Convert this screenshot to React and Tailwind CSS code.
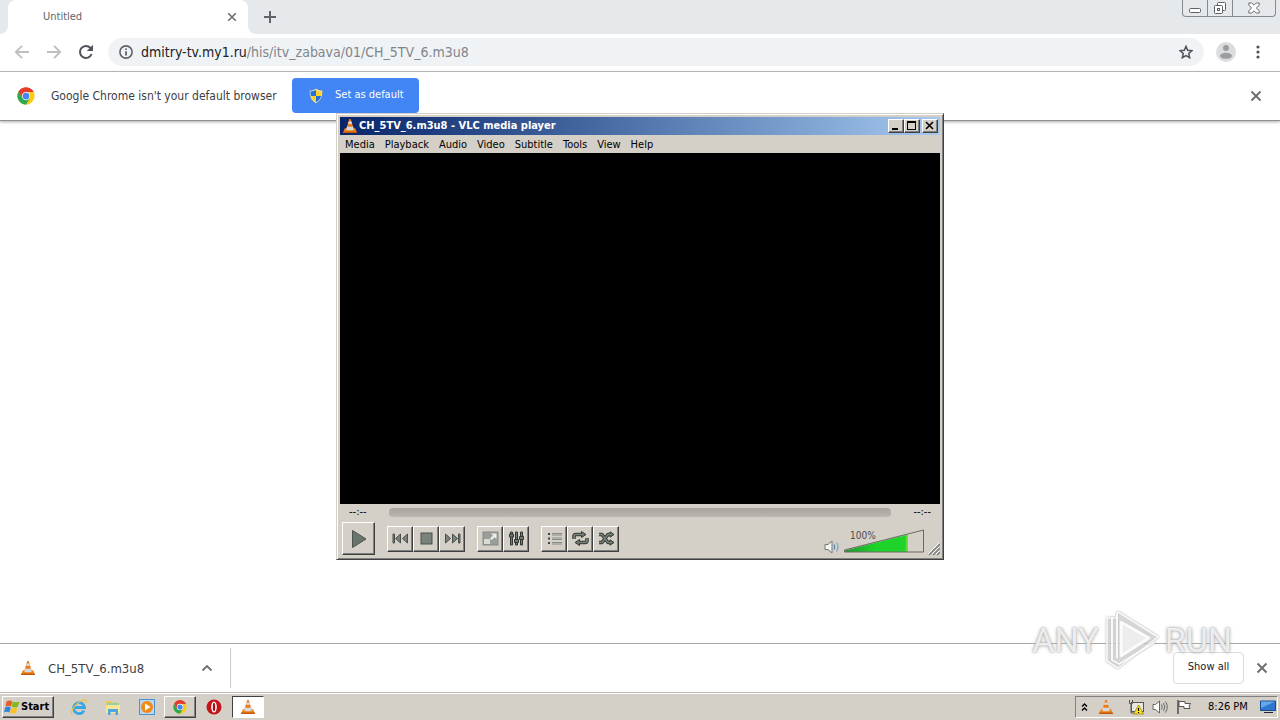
import React from "react";

const raised =
  "border border-t-white border-l-white border-r-[#404040] border-b-[#404040] shadow-[inset_-1px_-1px_0_#808080] bg-[#d4d0c8]";
const sunken =
  "border border-t-[#404040] border-l-[#404040] border-r-white border-b-white bg-white";

const Cone = ({ className }) => (
  <svg viewBox="0 0 16 16" className={className} aria-hidden="true">
    <path d="M2.800 10.200h10.400l1.800 4.800H1z" fill="#f08418" />
    <path d="M1.300 13.600h13.400L15 15H1z" fill="#c4560a" />
    <path d="M7.300 1h1.400l3.300 10.600c-1.600 1.200-6.400 1.200-8 0z" fill="#ee7a12" />
    <path d="M6.600 3.400h2.800l.7 2.200c-1 .6-3.200.6-4.200 0z" fill="#d9dde0" />
    <path d="M5.200 8.200c1.400.8 4.200.8 5.600 0l1 3.200c-1.700 1.200-5.900 1.200-7.600 0z" fill="#d3dae0" />
  </svg>
);

const Chrome = ({ className }) => (
  <svg viewBox="0 0 48 48" className={className} aria-hidden="true">
    <circle cx="24" cy="24" r="23" fill="#fbc916" />
    <path d="M24 24 4.100 12.500A23 23 0 0 1 43.900 12.500H24z" fill="#e33b2e" />
    <path d="M4.100 12.500A23 23 0 0 0 24 47l10-17.200L24 24 14 29.800z" fill="#2da94f" />
    <path d="M24 13h20.200A23 23 0 0 0 4.100 12.500L14 29.800z" fill="#e33b2e" />
    <circle cx="24" cy="24" r="11" fill="#fff" />
    <circle cx="24" cy="24" r="9" fill="#4285f4" />
  </svg>
);

const Close = ({ className }) => (
  <svg viewBox="0 0 12 12" className={className} fill="none" stroke="#6c7074" strokeWidth="2" aria-hidden="true">
    <path d="M1.500 1.500l9 9M10.500 1.500l-9 9" />
  </svg>
);

const Shield = () => (
  <svg viewBox="0 0 16 16" className="h-4 w-4" aria-hidden="true">
    <path d="M8 .5C10 1.800 12 2.300 14.500 2.300c.3 6-1.500 10.500-6.500 13.200C3 12.800 1.200 8.300 1.500 2.300 4 2.300 6 1.800 8 .5z" fill="#e8eef2" stroke="#5b8190" strokeWidth=".6" />
    <path d="M8 2v6H2.900c-.4-1.500-.4-3-.4-4.700C4.500 3.300 6.400 3 8 2z" fill="#2470d8" />
    <path d="M8 2v6h5.100c.4-1.500.4-3 .4-4.700C11.500 3.300 9.600 3 8 2z" fill="#fbd22b" />
    <path d="M8 8v6.400C5.300 12.800 3.600 10.800 2.900 8z" fill="#fbd22b" />
    <path d="M8 8v6.400c2.700-1.600 4.400-3.600 5.100-6.400z" fill="#2470d8" />
  </svg>
);

const TabStrip = () => (
  <div className="flex h-[34px] bg-white">
    <div className="w-2 rounded-br-lg bg-[#e5e9ec]" />
    <div className="w-60 bg-[#e5e9ec]">
      <div className="flex h-full items-center justify-between rounded-t-lg bg-white pr-[10px] pl-[35px] text-[#5f6368]">
        <span className="text-[11px]">Untitled</span>
        <button aria-label="Close tab" className="p-px">
          <Close className="h-[10px] w-[10px]" />
        </button>
      </div>
    </div>
    <div className="flex flex-1 items-start justify-between rounded-bl-lg bg-[#e5e9ec] pr-1 pl-4">
      <button aria-label="New tab" className="flex h-[34px] items-center">
        <svg viewBox="0 0 12 12" className="h-3 w-3" stroke="#5f6368" strokeWidth="2">
          <path d="M6 0v12M0 6h12" />
        </svg>
      </button>
      <div className="flex h-[17px] divide-x divide-[#848a90] rounded-b border border-t-0 border-[#848a90]">
        <button aria-label="Minimize" className="flex w-[25px] items-center justify-center">
          <svg viewBox="0 0 12 14" className="h-[14px] w-3" fill="#fff" stroke="#5a6169">
            <rect x=".5" y="7.500" width="11" height="4" rx="1" />
          </svg>
        </button>
        <button aria-label="Restore" className="flex w-[25px] items-center justify-center">
          <svg viewBox="0 0 14 14" className="h-[14px] w-[14px]" fill="#fff" stroke="#5a6169">
            <rect x="4.500" y="1.500" width="8" height="8" rx="1" />
            <rect x="1.500" y="4.500" width="8" height="8" rx="1" />
            <rect x="4.500" y="7.500" width="2" height="2" />
          </svg>
        </button>
        <button aria-label="Close" className="flex w-[42px] items-center justify-center">
          <svg viewBox="0 0 12 12" className="h-3 w-3" fill="#fff" stroke="#5a6169" strokeWidth=".9">
            <path d="M.8 1h3L6 3.200 8.200 1h3v2L8.500 6l2.700 3v2h-3L6 8.800 3.800 11h-3V9l2.700-3L.8 3z" />
          </svg>
        </button>
      </div>
    </div>
  </div>
);

const Toolbar = () => (
  <div className="flex h-[38px] items-center border-b border-[#b5b7b9] bg-white pr-3 pb-px pl-[14px]">
    <div className="flex items-center gap-4">
      <button aria-label="Back">
        <svg viewBox="0 0 16 16" className="h-4 w-4" fill="none" stroke="#bdbfc1" strokeWidth="1.800">
          <path d="M15 8H2M8 1.800 1.800 8 8 14.200" />
        </svg>
      </button>
      <button aria-label="Forward">
        <svg viewBox="0 0 16 16" className="h-4 w-4" fill="none" stroke="#bdbfc1" strokeWidth="1.800">
          <path d="M1 8h13M8 1.800 14.200 8 8 14.200" />
        </svg>
      </button>
      <button aria-label="Reload">
        <svg viewBox="0 0 16 16" className="h-4 w-4" fill="none" stroke="#505458" strokeWidth="2">
          <path d="M13.600 10A6 6 0 1 1 12.500 4" />
          <path d="M15 .8V7H8.800z" fill="#505458" stroke="none" />
        </svg>
      </button>
    </div>
    <div className="ml-[14px] flex h-7 flex-1 items-center rounded-full bg-[#f0f3f5] px-[11px]">
      <svg viewBox="0 0 14 14" className="h-[14px] w-[14px]" fill="none" stroke="#5f6368">
        <circle cx="7" cy="7" r="6.100" strokeWidth="1.600" />
        <path d="M7 6.200v4.300M7 3.400v1.600" strokeWidth="1.800" />
      </svg>
      <a href="#url" className="ml-2 flex-1 text-[14px] text-[#80858b]">
        <span className="text-[#202124]">dmitry-tv.my1.ru</span>
        /his/itv_zabava/01/CH_5TV_6.m3u8
      </a>
      <button aria-label="Bookmark">
        <svg viewBox="0 0 16 16" className="h-[14px] w-[14px]" fill="none" stroke="#505458" strokeWidth="1.700">
          <path d="M8 1.500l1.900 4.600 4.900.4-3.700 3.200 1.100 4.800L8 12l-4.200 2.500 1.100-4.800-3.700-3.200 4.900-.4z" />
        </svg>
      </button>
    </div>
    <button aria-label="Profile" className="ml-3">
      <svg viewBox="0 0 20 20" className="h-5 w-5">
        <circle cx="10" cy="10" r="10" fill="#dcdddf" />
        <circle cx="10" cy="6" r="3" fill="#9b9da0" />
        <ellipse cx="10" cy="13.800" rx="6" ry="3" fill="#9b9da0" />
      </svg>
    </button>
    <button aria-label="Menu" className="ml-3 flex w-5 justify-center">
      <svg viewBox="0 0 4 14" className="h-[14px] w-1" fill="#505458">
        <circle cx="2" cy="2" r="1.600" />
        <circle cx="2" cy="7" r="1.600" />
        <circle cx="2" cy="12" r="1.600" />
      </svg>
    </button>
  </div>
);

const InfoBar = () => (
  <div className="flex h-[49px] items-center border-b border-[#8f8f8f] bg-white pr-[18px] pb-px pl-[17px] shadow-[0_1px_3px_#aaa]">
    <Chrome className="h-[18px] w-[18px]" />
    <span className="ml-4 w-[241px] text-[12px] whitespace-nowrap text-[#3c4043]">
      Google Chrome isn't your default browser
    </span>
    <button className="flex h-[35px] w-[127px] items-center gap-[11px] rounded bg-[#4285f4] pl-4 text-[11px] text-white">
      <Shield />
      Set as default
    </button>
    <button aria-label="Dismiss" className="ml-auto">
      <Close className="h-3 w-3" />
    </button>
  </div>
);

const menus = ["Media", "Playback", "Audio", "Video", "Subtitle", "Tools", "View", "Help"];

const glyph = { fill: "#7a827c", stroke: "#4b504c", strokeWidth: 1 };

const controlGroups = [
  [
    {
      label: "Previous",
      icon: (
        <g {...glyph}>
          <path d="M1 4h1.500v9H1zM8.500 4v9L3.500 8.500zM15.500 4v9l-5-4.500z" />
        </g>
      ),
    },
    { label: "Stop", icon: <rect x="3" y="3" width="11" height="11" {...glyph} /> },
    {
      label: "Next",
      icon: (
        <g {...glyph}>
          <path d="M14.500 4H16v9h-1.500zM8.500 4v9l5-4.500zM1.500 4v9l5-4.500z" />
        </g>
      ),
    },
  ],
  [
    {
      label: "Fullscreen",
      icon: (
        <g>
          <rect x="1" y="2" width="15" height="13" fill="#9a9e9a" stroke="#858a86" />
          <path d="M2 9h6v5H2z" fill="#d8dad6" />
          <path d="M9 3.500h5.500V9L12.700 7.200 9.500 10 8 8.500l3-3z" fill="#eceeea" />
        </g>
      ),
    },
    {
      label: "Equalizer",
      icon: (
        <g fill="#737a74" stroke="#343834">
          <path d="M2.500 2h2v13h-2zM7.500 2h2v13h-2zM12.500 2h2v13h-2z" />
          <path d="M1.500 4h4v3h-4zM6.500 9.500h4v3h-4zM11.500 6.500h4v3h-4z" />
        </g>
      ),
    },
  ],
  [
    {
      label: "Playlist",
      icon: (
        <g>
          <path d="M2 3h2v2H2zM2 7.500h2v2H2zM2 12h2v2H2z" fill="#3e433f" />
          <path d="M6 3.500h10M6 5h10M6 8h10M6 9.500h10M6 12.500h10M6 14h10" stroke="#868c87" />
        </g>
      ),
    },
    {
      label: "Loop",
      icon: (
        <g fill="none" strokeLinejoin="round">
          <path d="M2 9V6.500Q2 4.500 4 4.500h6M15 8v2.500q0 2-2 2H7" stroke="#343834" strokeWidth="3.500" />
          <path d="M9.500 1.500v6L14 4.500zM7.500 9.500v6L3 12.500z" fill="#6f7771" stroke="#343834" />
          <path d="M2 9V6.500Q2 4.500 4 4.500h6M15 8v2.500q0 2-2 2H7" stroke="#7d847e" strokeWidth="1.500" />
        </g>
      ),
    },
    {
      label: "Shuffle",
      icon: (
        <g fill="none" strokeLinejoin="round">
          <path d="M1 4.500h3l6 8h3M1 12.500h3l6-8h3" stroke="#343834" strokeWidth="3.500" />
          <path d="M12 1.800v5.400l4-2.700zM12 9.800v5.400l4-2.700z" fill="#6f7771" stroke="#343834" />
          <path d="M1 4.500h3l6 8h3M1 12.500h3l6-8h3" stroke="#7d847e" strokeWidth="1.300" />
        </g>
      ),
    },
  ],
];

const VlcWindow = () => (
  <section className="absolute top-[113px] left-1/2 w-[608px] -translate-x-1/2 border border-t-[#d4d0c8] border-r-[#404040] border-b-[#404040] border-l-[#d4d0c8] bg-[#d4d0c8] p-[3px] shadow-[inset_1px_1px_0_#fff,inset_-1px_-1px_0_#808080]">
    <header className="flex h-[18px] items-center bg-linear-to-r from-[#0a246a] to-[#a6caf0] px-0.5">
      <Cone className="h-4 w-4" />
      <h1 className="ml-px flex-1 text-[11px] font-bold text-white">CH_5TV_6.m3u8 - VLC media player</h1>
      <button aria-label="Minimize" className={`flex h-[14px] w-4 items-center justify-center ${raised}`}>
        <svg viewBox="0 0 10 10" className="h-[10px] w-[10px]">
          <path d="M1 7h6v2H1z" />
        </svg>
      </button>
      <button aria-label="Maximize" className={`flex h-[14px] w-4 items-center justify-center ${raised}`}>
        <svg viewBox="0 0 10 10" className="h-[10px] w-[10px]">
          <path d="M0 0h9v9H0zM1 2v6h7V2z" fillRule="evenodd" />
        </svg>
      </button>
      <button aria-label="Close" className={`ml-0.5 flex h-[14px] w-4 items-center justify-center ${raised}`}>
        <svg viewBox="0 0 10 10" className="h-[10px] w-[10px]" stroke="#000" strokeWidth="1.600">
          <path d="M1 1l7 7M8 1l-7 7" />
        </svg>
      </button>
    </header>

    <nav className="flex h-[18px] items-center gap-[10px] pt-0.5 pl-[5px] text-[11px] text-black">
      {menus.map((m) => (
        <button key={m}>{m}</button>
      ))}
    </nav>

    <div className="h-[351px] bg-black" />

    <div className="flex h-[17px] items-center px-[9px] text-[11px] text-black">
      <span className="w-10">--:--</span>
      <input
        type="range"
        aria-label="Position"
        defaultValue="0"
        className="h-[9px] flex-1 appearance-none rounded-sm bg-linear-to-b from-[#a8a39d] to-[#bcb7b1] [&::-webkit-slider-thumb]:appearance-none"
      />
      <span className="w-10 text-right">--:--</span>
    </div>

    <div className="flex h-[35px] items-center justify-between pl-0.5">
      <div className="flex items-center gap-3">
        <button aria-label="Play" className={`flex h-[33px] w-[33px] items-center justify-center ${raised}`}>
          <svg viewBox="0 0 18 20" className="h-5 w-[18px]">
            <path d="M2.500 1.500v17L16 10z" fill="#69746c" stroke="#4b524d" strokeLinejoin="round" />
          </svg>
        </button>
        {controlGroups.map((group) => (
          <div key={group[0].label} className="flex">
            {group.map(({ label, icon }) => (
              <button
                key={label}
                aria-label={label}
                className={`flex h-[26px] w-[26px] items-center justify-center ${raised}`}
              >
                <svg viewBox="0 0 17 17" className="h-[17px] w-[17px]">
                  {icon}
                </svg>
              </button>
            ))}
          </div>
        ))}
      </div>

      <div className="flex items-end gap-1 self-end">
        <svg viewBox="0 0 16 14" className="mb-0.5 h-[14px] w-4" fill="none">
          <path d="M1 4.500h3L8 1v12L4 9.500H1z" fill="#f4f4f2" stroke="#777" />
          <path d="M10 4.500q1.500 2.500 0 5" stroke="#4c86b8" strokeWidth="1.300" />
          <path d="M12.500 2.500q3 4.500 0 9" stroke="#7fa9c8" strokeWidth="1.300" />
        </svg>
        <label className="relative mb-[3px] block h-6 w-20">
          <svg viewBox="0 0 80 24" className="h-6 w-20">
            <defs>
              <linearGradient id="vol">
                <stop offset="0" stopColor="#1e9a2c" />
                <stop offset=".5" stopColor="#1ed42a" />
                <stop offset=".95" stopColor="#1ed42a" />
                <stop offset="1" stopColor="#8fdc3a" />
              </linearGradient>
            </defs>
            <path d="M1 21.500 64 5.500V23H1z" fill="url(#vol)" />
            <path d="M.5 21 79.500 1v22H.5z" fill="none" stroke="#6b6862" />
          </svg>
          <span className="absolute top-0 left-[6px] text-[10px] leading-[14px] text-[#4c4c4c]">100%</span>
          <input
            type="range"
            aria-label="Volume"
            max="125"
            defaultValue="100"
            className="absolute inset-0 h-full w-full opacity-0"
          />
        </label>
        <svg viewBox="1 0 12 14" className="h-[14px] w-3">
          <path d="M2 13 13 2M6 13l7-7M10 13l3-3" stroke="#808080" strokeWidth="1.600" />
          <path d="M1 12 12 1M5 12l7-7M9 12l3-3" stroke="#fff" strokeWidth="1" />
        </svg>
      </div>
    </div>
  </section>
);

const Watermark = () => (
  <div
    aria-hidden="true"
    className="pointer-events-none absolute right-12 bottom-12 flex items-center gap-1 font-['Roboto','Liberation_Sans',sans-serif] text-[34px] leading-none text-white/80 [text-shadow:0_0_2px_#999,0_0_4px_#bbb]"
  >
    <span>ANY</span>
    <svg viewBox="0 0 58 64" className="h-16 w-[58px] drop-shadow-[0_0_1px_#999]" fill="none" stroke="#fff" strokeOpacity=".9" strokeLinejoin="round">
      <path d="M15 4 55 29 15 60 4 53V10H13z" fill="#e4e4e4" fillOpacity=".45" strokeWidth="1.500" />
      <path d="M18 14l28 16-28 18z" fill="#fff" fillOpacity=".7" strokeWidth="3" />
      <path d="M9 10v42l7 4 36-22M14 6v44" strokeWidth="2" />
    </svg>
    <span>RUN</span>
  </div>
);

const DownloadBar = () => (
  <div className="flex h-[49px] items-center border-t border-[#a9a9a9] bg-white pr-3 pb-px">
    <div className="flex h-10 w-[231px] items-center border-r border-[#c9cbcd] pr-[17px] pl-5">
      <Cone className="h-4 w-4" />
      <a href="#download" className="ml-3 flex-1 pt-0.5 text-[13px] text-[#3c4043]">
        CH_5TV_6.m3u8
      </a>
      <button aria-label="Download options">
        <svg viewBox="0 0 12 8" className="h-2 w-3" fill="none" stroke="#6c7074" strokeWidth="1.800">
          <path d="M1.500 6.500 6 2l4.500 4.500" />
        </svg>
      </button>
    </div>
    <button className="ml-auto h-8 w-[71px] rounded border border-[#dadce0] text-[11px] text-[#202124]">
      Show all
    </button>
    <button aria-label="Close downloads" className="ml-3">
      <Close className="h-3 w-3" />
    </button>
  </div>
);

const Taskbar = () => (
  <footer className="flex h-7 items-center border-t border-[#bdbab4] bg-[#d4d0c8] px-0.5 pt-px text-[11px] text-black shadow-[inset_0_1px_0_#fff]">
    <button className={`flex h-[22px] w-[52px] items-center gap-px pl-px font-bold ${raised}`}>
      <svg viewBox="0 0 16 16" className="h-4 w-4">
        <path d="M2.500 2.500q3-2 5.800 0L7 7.600Q4.500 6 1.500 7.400z" fill="#ee5a24" />
        <path d="M8.800 2.600q3 1.500 6.700 0l-1.700 5.200q-3 1.200-6 0z" fill="#7fba1c" />
        <path d="M1.200 8.200q3-1.400 5.500.2l-1.300 5.200q-2.800-1.600-5.400-.2z" fill="#2f86dd" />
        <path d="M7.400 8.700q3 1.300 6.100 0l-1.600 5.200q-3 1.200-5.800-.2z" fill="#fbc31c" />
      </svg>
      Start
    </button>
    <div className="ml-2 flex items-center">
      <button aria-label="Internet Explorer" className="flex w-[34px] justify-center">
        <svg viewBox="0 0 18 18" className="h-[18px] w-[18px]" fill="none">
          <path d="M14 12.500A5.500 5.500 0 1 1 14.500 9.500H4.500" stroke="#38a5e4" strokeWidth="2.800" />
          <path d="M2.500 16.500C-.5 15 4 7 10 3.500S17 2 16 5" stroke="#edc344" strokeWidth="1.300" />
        </svg>
      </button>
      <button aria-label="Explorer" className="flex w-[34px] justify-center">
        <svg viewBox="0 0 18 18" className="h-[18px] w-[18px]">
          <path d="M2 3h5l1 1.500h7V15H2z" fill="#e9c75a" />
          <path d="M3 5h12v3H3z" fill="#8fd3a0" />
          <path d="M2 7h14v8H2z" fill="#f8e59a" />
          <path d="M4 17v-6h10v6h-2.500v-3h-5v3z" fill="#49a8df" />
        </svg>
      </button>
      <button aria-label="Media Player" className="flex w-[34px] justify-center">
        <svg viewBox="0 0 16 16" className="h-4 w-4">
          <rect x=".5" y=".5" width="15" height="15" fill="#b9d7ef" stroke="#4d92d0" />
          <circle cx="8" cy="8" r="6" fill="#f48a16" />
          <path d="M6 4.500v7L11.500 8z" fill="#fff" />
        </svg>
      </button>
      <button aria-label="Chrome" className={`flex h-[22px] w-8 items-center justify-center ${raised}`}>
        <Chrome className="h-[14px] w-[14px]" />
      </button>
      <button aria-label="Opera" className="flex w-9 justify-center">
        <svg viewBox="0 0 16 16" className="h-4 w-4">
          <circle cx="8" cy="8" r="7.500" fill="#c3131b" />
          <ellipse cx="8" cy="8" rx="2.800" ry="5.500" fill="#fff" />
          <ellipse cx="8" cy="8" rx="1.200" ry="4.300" fill="#a50d14" />
        </svg>
      </button>
      <button aria-label="VLC" className={`flex h-[22px] w-8 items-center justify-center ${sunken}`}>
        <Cone className="h-4 w-4" />
      </button>
    </div>
    <div className="ml-auto flex h-[22px] items-center border border-t-[#808080] border-r-white border-b-white border-l-[#808080] pr-px pl-[5px]">
      <button aria-label="Show hidden icons">
        <svg viewBox="0 0 7 10" className="h-[10px] w-[7px]" fill="none" stroke="#000" strokeWidth="1.400">
          <path d="M1 4.500 3.500 2 6 4.500M1 8.500 3.500 6 6 8.500" />
        </svg>
      </button>
      <Cone className="ml-[10px] h-4 w-4" />
      <svg viewBox="0 0 16 16" className="ml-[14px] h-4 w-4">
        <rect x="3.500" y="3.500" width="12" height="9" fill="#e8e8e0" stroke="#555" />
        <path d="M1.500 1v3.500h3V1M3 4.500V14h3" fill="none" stroke="#555" />
        <path d="M10.500 6 15.500 15H5.500z" fill="#fbe11c" stroke="#8d7a10" strokeWidth=".7" />
        <path d="M10.500 9v3M10.500 13v1" stroke="#000" strokeWidth="1.200" />
      </svg>
      <svg viewBox="0 0 16 16" className="ml-2 h-4 w-4" fill="none" stroke="#666">
        <path d="M1 5.500h2.500L7.500 2v12L3.500 10.500H1z" fill="#fff" />
        <path d="M9.500 5.500q1.500 2.500 0 5M11.500 4q2.500 4 0 8M13.500 2.500q3.500 5.500 0 11" />
      </svg>
      <svg viewBox="0 0 16 16" className="ml-2 h-4 w-4" stroke="#555">
        <path d="M2 1v14" strokeWidth="1.600" />
        <path d="M3 2.500h6v2h5.500L13 7l1 2.500H8v-2H3z" fill="#fff" />
      </svg>
      <time className="ml-4 w-10 whitespace-nowrap">8:26 PM</time>
      <svg viewBox="0 0 16 14" className="ml-3 h-[14px] w-4">
        <path d="M.5 1h15v9.500H.5z" fill="#2f76cf" stroke="#174a8e" />
        <path d="M1 1.500h14L1 8z" fill="#66a8ea" />
        <path d="M4 12.500h9" stroke="#223" />
      </svg>
    </div>
  </footer>
);

const App = () => (
  <div className="relative flex h-screen flex-col overflow-hidden bg-white font-['DejaVu_Sans_Condensed','Noto_Sans',sans-serif]">
    <TabStrip />
    <Toolbar />
    <InfoBar />
    <main className="flex-1" />
    <DownloadBar />
    <Taskbar />
    <VlcWindow />
    <Watermark />
  </div>
);

export default App;
